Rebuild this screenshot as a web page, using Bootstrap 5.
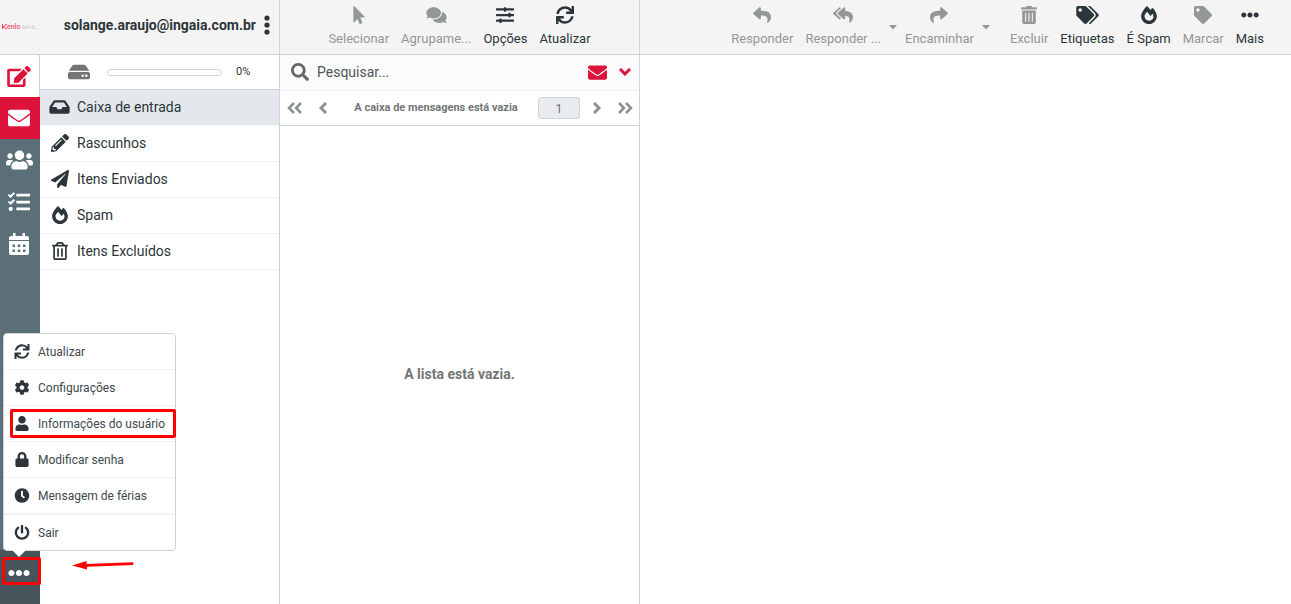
<!DOCTYPE html>
<html lang="pt-BR">
<head>
<meta charset="utf-8">
<meta name="viewport" content="width=device-width, initial-scale=1">
<title>Kenlo Mail</title>
<link href="https://cdn.jsdelivr.net/npm/bootstrap@5.3.0/dist/css/bootstrap.min.css" rel="stylesheet">
<script defer src="https://cdn.jsdelivr.net/npm/bootstrap@5.3.0/dist/js/bootstrap.bundle.min.js"></script>
<style>
  :root { --ink:#2c363a; --soft:#737677; --brand:#dc143c; --rule:#ced4da; --hair:#f1f3f4; --slate:#5b6f78; }
  body { font-family: Roboto, "Liberation Sans", sans-serif; font-size: 14px; line-height: 20px; color: var(--ink); background: #fff; }
  svg { display: block; fill: currentColor; flex: none; }
  a { color: inherit; text-decoration: none; }
  button { color: inherit; background: none; border: 0; padding: 0; }
  .head-bar { height: 55px; background: #f4f4f4; border-bottom: 1px solid var(--rule); }
  .rail-col { width: 40px; }
  .folder-col { width: 240px; border-right: 1px solid var(--rule); }
  .list-col { width: 360px; border-right: 1px solid var(--rule); }
  .rail-menu { background: var(--slate); color: #fff; }
  .rail-menu a, .more-btn { height: 42px; display: flex; align-items: center; justify-content: center; padding-right: 2px; }
  .rail-menu .compose { background: #fff; color: var(--brand); border-right: 1px solid var(--rule); }
  .rail-menu .current { background: var(--brand); }
  .rail-foot { background: #46545b; height: 54px; }
  .more-btn { width: 100%; height: 46px; color: #fff; }
  .account { padding: 0 9px 4px 0; gap: 8px; }
  .quota { height: 35px; border-bottom: 1px solid var(--rule); color: var(--soft); padding-left: 28px; }
  .quota .progress { width: 115px; height: 7px; background: #fff; border: 1px solid var(--rule); margin: 0 14px 0 17px; }
  .quota-value { font-size: 11px; color: var(--ink); }
  .folder { height: 36px; border-bottom: 1px solid var(--hair); padding: 0 0 2px 9px; gap: 7px; }
  .folder.current { background: #e4e8ec; }
  .ico-slot { width: 21px; display: flex; justify-content: center; flex: none; }
  .tool { font-size: 13px; line-height: 16px; padding: 6px 6px 0; min-width: 40px; display: flex; flex-direction: column; align-items: center; gap: 7px; height: 54px; white-space: nowrap; }
  .tool svg { height: 18px; }
  .tool:disabled, .caret:disabled { color: #939798; }
  .caret { width: 12px; height: 54px; display: flex; justify-content: center; align-items: center; }
  .reading-tools { padding-right: 21px; }
  .search-row { height: 36px; background: #fbfbfb; border-bottom: 1px solid var(--hair); padding: 0 8px 1px 11px; gap: 8px; }
  .search-row input { border: 0; background: none; outline: 0; color: var(--ink); padding: 0; min-width: 0; }
  .search-row input::placeholder { color: #4d5659; opacity: 1; }
  .search-row button { color: var(--brand); }
  .search-icon { color: #66696a; }
  .pager { height: 35px; border-bottom: 1px solid var(--rule); color: #8b9092; padding: 0 6px 0 7px; }
  .pager-pair { gap: 17px; }
  .pager strong { font-size: 11px; color: var(--soft); padding-left: 7px; }
  .pager input { width: 42px; height: 22px; margin-right: 13px; border: 1px solid var(--rule); border-radius: 3px; background: #e9ecef; text-align: center; font-size: 13px; color: var(--soft); padding: 0; }
  .stroke { fill: none; stroke: currentColor; stroke-width: 3; }
  .empty-note { padding-top: 238px; color: var(--soft); }
  .more-menu { position: absolute; left: 3px; bottom: 53px; width: 173px; border: 1px solid var(--rule); border-radius: 4px; background: #fff; font-size: 12px; z-index: 2; }
  .more-menu a { height: 36px; display: flex; align-items: center; gap: 7px; padding-left: 9px; border-bottom: 1px solid var(--hair); color: #40494d; }
  .more-menu a.before-exit { height: 37px; border-bottom-width: 2px; }
  .more-menu a.exit { height: 35px; border-bottom: 0; }
  .more-menu svg { width: 20px; height: 15px; color: var(--ink); }
  .more-menu .ico-slot { width: 18px; }
  .tip { position: absolute; left: 8px; bottom: -7px; border: 7px solid transparent; border-top-color: #fff; border-bottom: 0; }
  .marker { position: absolute; border: 3px solid #f00; border-radius: 2px; pointer-events: none; z-index: 3; }
  .mark-user { left: 6px; right: -1px; top: 75px; height: 29px; }
  .mark-more { left: 2px; width: 39px; height: 28px; bottom: 19px; }
  .arrow { position: absolute; left: 72px; bottom: 34px; z-index: 3; color: #f00; }
</style>
</head>
<body>
<svg class="d-none" aria-hidden="true">
  <symbol id="envelope" viewBox="0 0 512 512"><path d="M502.3 190.8c3.9-3.1 9.7-.2 9.7 4.7V400c0 26.5-21.5 48-48 48H48c-26.5 0-48-21.5-48-48V195.6c0-5 5.7-7.8 9.7-4.7 22.4 17.4 52.1 39.5 154.1 113.6 21.1 15.4 56.7 47.8 92.2 47.6 35.7.3 72-32.8 92.3-47.6 102-74.1 131.6-96.3 154-113.7zM256 320c23.2.4 56.6-29.2 73.4-41.4 132.7-96.3 142.8-104.7 173.4-128.7 5.8-4.5 9.2-11.5 9.2-18.9v-19c0-26.5-21.5-48-48-48H48c-26.5 0-48 21.5-48 48v19c0 7.4 3.4 14.3 9.2 18.9 30.6 23.9 40.7 32.4 173.4 128.7 16.8 12.2 50.2 41.8 73.4 41.4z"/></symbol>
  <symbol id="sync" viewBox="0 0 512 512"><path d="M440.65 12.57l4 82.77A247.16 247.16 0 0 0 255.83 8C134.73 8 33.91 94.92 12.29 209.82A12 12 0 0 0 24.09 224h49.05a12 12 0 0 0 11.67-9.26 175.91 175.91 0 0 1 317-56.94l-101.46-4.86a12 12 0 0 0-12.57 12v47.41a12 12 0 0 0 12 12H500a12 12 0 0 0 12-12V12a12 12 0 0 0-12-12h-47.37a12 12 0 0 0-11.98 12.57zM255.83 432a175.61 175.61 0 0 1-146-77.8l101.8 4.87a12 12 0 0 0 12.57-12v-47.4a12 12 0 0 0-12-12H12a12 12 0 0 0-12 12V500a12 12 0 0 0 12 12h47.35a12 12 0 0 0 12-12.6l-4.15-82.57A247.17 247.17 0 0 0 255.83 504c121.11 0 221.93-86.92 243.55-201.82a12 12 0 0 0-11.8-14.18h-49.05a12 12 0 0 0-11.67 9.26A175.86 175.86 0 0 1 255.83 432z"/></symbol>
  <symbol id="dots" viewBox="0 0 512 512"><path d="M328 256c0 39.8-32.2 72-72 72s-72-32.2-72-72 32.2-72 72-72 72 32.2 72 72zm104-72c-39.8 0-72 32.2-72 72s32.2 72 72 72 72-32.2 72-72-32.2-72-72-72zm-352 0c-39.8 0-72 32.2-72 72s32.2 72 72 72 72-32.2 72-72-32.2-72-72-72z"/></symbol>
  <symbol id="fire" viewBox="0 0 448 512"><path d="M323.56 51.2c-20.8 19.3-39.58 39.59-56.22 59.97C240.08 73.62 206.28 35.53 168 0 69.74 91.17 0 209.96 0 281.6 0 408.85 100.29 512 224 512s224-103.15 224-230.4c0-53.27-51.98-163.14-124.44-230.4zm-19.47 340.65C282.43 407.01 255.72 416 226.86 416 154.71 416 96 368.26 96 290.75c0-38.61 24.31-72.63 72.79-130.75 6.93 7.98 98.83 125.34 98.83 125.34l58.63-66.88c4.14 6.85 7.91 13.55 11.27 19.97 27.35 52.19 15.81 118.97-33.43 153.42z"/></symbol>
  <symbol id="reply" viewBox="0 0 512 512"><path d="M8.309 189.836L184.313 37.851C199.719 24.546 224 35.347 224 56.015v80.053c160.629 1.839 288 34.032 288 186.258 0 61.441-39.581 122.309-83.333 154.132-13.653 9.931-33.111-2.533-28.077-18.631 45.344-145.012-21.507-183.51-176.59-185.742V360c0 20.7-24.3 31.453-39.687 18.164l-176.004-152c-11.071-9.562-11.086-26.753 0-36.328z"/></symbol>
  <symbol id="caret" viewBox="0 0 8 5"><path d="M0 0h8L4 4.500z"/></symbol>
</svg>

<div class="d-flex vh-100 position-relative overflow-hidden">
  <nav class="rail-col d-flex flex-column flex-shrink-0" aria-label="Tarefas">
    <div class="head-bar d-flex align-items-center">
      <svg width="40" height="12" viewBox="0 0 40 12" role="img" aria-label="Kenlo Mail"><path d="M2.500 3v5M7 3L3 6l4 2" fill="none" stroke="#f0405f"/><text x="7" y="8" font-size="7" font-weight="500" fill="#f0506e">enlo</text><text x="22" y="8" font-size="6" fill="#c8c8c8">MAIL</text></svg>
    </div>
    <div class="rail-menu flex-grow-1">
      <a href="#" class="compose" aria-label="Criar e-mail"><svg width="24" height="21" viewBox="0 0 576 512"><path d="M402.6 83.2l90.2 90.2c3.8 3.8 3.8 10 0 13.8L274.4 405.6l-92.8 10.3c-12.4 1.4-22.9-9.1-21.5-21.5l10.3-92.8L388.8 83.2c3.8-3.8 10-3.8 13.8 0zm162-22.9l-48.8-48.8c-15.2-15.2-39.9-15.2-55.2 0l-35.4 35.4c-3.8 3.8-3.8 10 0 13.8l90.2 90.2c3.8 3.8 10 3.8 13.8 0l35.4-35.4c15.2-15.3 15.2-40 0-55.2zM384 346.2V448H64V128h229.8c3.2 0 6.2-1.3 8.5-3.5l40-40c7.6-7.6 2.2-20.5-8.5-20.5H48C21.5 64 0 85.5 0 112v352c0 26.5 21.5 48 48 48h352c26.5 0 48-21.5 48-48V306.2c0-10.7-12.9-16-20.5-8.5l-40 40c-2.2 2.3-3.5 5.3-3.5 8.5z"/></svg></a>
      <a href="#" class="current" aria-label="E-mail"><svg width="22" height="22"><use href="#envelope"/></svg></a>
      <a href="#" aria-label="Contatos"><svg width="27" height="22" viewBox="0 0 640 512"><path d="M96 224c35.3 0 64-28.7 64-64s-28.7-64-64-64-64 28.7-64 64 28.7 64 64 64zm448 0c35.3 0 64-28.7 64-64s-28.7-64-64-64-64 28.7-64 64 28.7 64 64 64zm32 32h-64c-17.6 0-33.5 7.1-45.1 18.6 40.3 22.1 68.9 62 75.1 109.4h66c17.7 0 32-14.3 32-32v-32c0-35.3-28.7-64-64-64zm-256 0c61.9 0 112-50.1 112-112S381.9 32 320 32 208 82.1 208 144s50.1 112 112 112zm76.8 32h-8.3c-20.8 10-43.9 16-68.5 16s-47.6-6-68.5-16h-8.3C179.6 288 128 339.6 128 403.2V432c0 26.5 21.5 48 48 48h288c26.5 0 48-21.5 48-48v-28.8c0-63.6-51.6-115.2-115.2-115.2zm-223.7-13.4C161.5 263.1 145.6 256 128 256H64c-35.3 0-64 28.7-64 64v32c0 17.7 14.3 32 32 32h65.9c6.3-47.4 34.9-87.3 75.2-109.4z"/></svg></a>
      <a href="#" aria-label="Lista de tarefas"><svg width="22" height="22" viewBox="0 0 512 512"><path d="M139.61 35.5a12 12 0 0 0-17 0L58.93 98.81l-22.7-22.12a12 12 0 0 0-17 0L3.53 92.41a12 12 0 0 0 0 17l47.59 47.4a12.78 12.78 0 0 0 17.61 0l15.59-15.62L156.52 69a12.09 12.09 0 0 0 .09-17zm0 159.19a12 12 0 0 0-17 0l-63.68 63.72-22.7-22.1a12 12 0 0 0-17 0L3.53 252a12 12 0 0 0 0 17L51 316.5a12.77 12.77 0 0 0 17.6 0l15.7-15.69 72.2-72.22a12 12 0 0 0 .09-16.9zM64 368c-26.49 0-48.59 21.5-48.59 48S37.53 464 64 464a48 48 0 0 0 0-96zm432 16H208a16 16 0 0 0-16 16v32a16 16 0 0 0 16 16h288a16 16 0 0 0 16-16v-32a16 16 0 0 0-16-16zm0-320H208a16 16 0 0 0-16 16v32a16 16 0 0 0 16 16h288a16 16 0 0 0 16-16V80a16 16 0 0 0-16-16zm0 160H208a16 16 0 0 0-16 16v32a16 16 0 0 0 16 16h288a16 16 0 0 0 16-16v-32a16 16 0 0 0-16-16z"/></svg></a>
      <a href="#" aria-label="Calendário"><svg width="20" height="22" viewBox="0 0 20 22"><path fill-rule="evenodd" d="M4 0h2.500v3h7V0H16v3h2a2 2 0 0 1 2 2v2H0V5a2 2 0 0 1 2-2h2zM0 8h20v12a2 2 0 0 1-2 2H2a2 2 0 0 1-2-2zM3.500 11.500v2.500h2.500v-2.500zM8.750 11.500v2.500h2.500v-2.500zM14 11.500v2.500h2.500v-2.500zM3.500 16.500v2.500h2.500v-2.500zM8.750 16.500v2.500h2.500v-2.500zM14 16.500v2.500h2.500v-2.500z"/></svg></a>
    </div>
    <div class="rail-foot"><button class="more-btn" type="button" aria-label="Mais opções" aria-expanded="true"><svg width="22" height="22"><use href="#dots"/></svg></button></div>
  </nav>

  <aside class="folder-col flex-shrink-0">
    <div class="head-bar account d-flex align-items-center justify-content-end">
      <strong>solange.araujo@ingaia.com.br</strong>
      <button type="button" aria-label="Menu da conta"><svg width="6" height="20" viewBox="0 0 6 20"><circle cx="3" cy="3" r="2.6"/><circle cx="3" cy="10" r="2.6"/><circle cx="3" cy="17" r="2.6"/></svg></button>
    </div>
    <div class="quota d-flex align-items-center">
      <svg width="22" height="20" viewBox="0 0 576 512"><path d="M576 304v96c0 26.51-21.49 48-48 48H48c-26.51 0-48-21.49-48-48v-96c0-26.51 21.49-48 48-48h480c26.51 0 48 21.49 48 48zm-48-80a79.557 79.557 0 0 1 30.777 6.165L462.25 85.374A48.003 48.003 0 0 0 422.311 64H153.689a48 48 0 0 0-39.938 21.374L17.223 230.165A79.557 79.557 0 0 1 48 224h480zm-48 96c-17.673 0-32 14.327-32 32s14.327 32 32 32 32-14.327 32-32-14.327-32-32-32zm-96 0c-17.673 0-32 14.327-32 32s14.327 32 32 32 32-14.327 32-32-14.327-32-32-32z"/></svg>
      <div class="progress" role="progressbar" aria-label="Cota" aria-valuenow="0" aria-valuemin="0" aria-valuemax="100"><div class="progress-bar" style="width:0%"></div></div>
      <span class="quota-value">0%</span>
    </div>
    <a href="#" class="folder current d-flex align-items-center"><span class="ico-slot"><svg width="21" height="18" viewBox="0 0 576 512"><path d="M567.938 243.908L462.25 85.374A48.003 48.003 0 0 0 422.311 64H153.689a48 48 0 0 0-39.938 21.374L8.062 243.908A47.994 47.994 0 0 0 0 270.533V400c0 26.51 21.49 48 48 48h480c26.51 0 48-21.49 48-48V270.533a47.994 47.994 0 0 0-8.062-26.625zM162.252 128h251.497l85.333 128H376l-32 64H232l-32-64H76.918l85.334-128z"/></svg></span>Caixa de entrada</a>
    <a href="#" class="folder d-flex align-items-center"><span class="ico-slot"><svg width="18" height="18" viewBox="0 0 512 512"><path d="M497.9 142.1l-46.1 46.1c-4.7 4.7-12.3 4.7-17 0l-111-111c-4.7-4.7-4.7-12.3 0-17l46.1-46.1c18.7-18.7 49.1-18.7 67.9 0l60.1 60.1c18.8 18.7 18.8 49.1 0 67.9zM284.2 99.8L21.6 362.4.4 483.9c-2.9 16.4 11.4 30.6 27.8 27.8l121.5-21.3 262.6-262.6c4.7-4.7 4.7-12.3 0-17l-111-111c-4.8-4.7-12.4-4.7-17.1 0zM124.1 339.9c-5.5-5.5-5.5-14.3 0-19.8l154-154c5.5-5.5 14.3-5.5 19.8 0s5.5 14.3 0 19.8l-154 154c-5.5 5.5-14.3 5.5-19.8 0zM88 424h48v36.3l-64.5 11.3-31.1-31.1L51.7 376H88v48z"/></svg></span>Rascunhos</a>
    <a href="#" class="folder d-flex align-items-center"><span class="ico-slot"><svg width="18" height="18" viewBox="0 0 512 512"><path d="M476 3.2L12.5 270.6c-18.1 10.4-15.8 35.6 2.2 43.2L121 358.4l287.3-253.2c5.5-4.9 13.3 2.6 8.6 8.3L176 407v80.5c0 23.6 28.5 32.9 42.5 15.8L282 426l124.6 52.2c14.2 6 30.4-2.9 33-18.2l72-432C515 7.8 493.3-6.8 476 3.2z"/></svg></span>Itens Enviados</a>
    <a href="#" class="folder d-flex align-items-center"><span class="ico-slot"><svg width="16" height="18"><use href="#fire"/></svg></span>Spam</a>
    <a href="#" class="folder d-flex align-items-center"><span class="ico-slot"><svg width="16" height="18" viewBox="0 0 448 512"><path d="M268 416h24a12 12 0 0 0 12-12V188a12 12 0 0 0-12-12h-24a12 12 0 0 0-12 12v216a12 12 0 0 0 12 12zM432 80h-82.41l-34-56.7A48 48 0 0 0 274.41 0H173.59a48 48 0 0 0-41.16 23.3L98.41 80H16A16 16 0 0 0 0 96v16a16 16 0 0 0 16 16h16v336a48 48 0 0 0 48 48h288a48 48 0 0 0 48-48V128h16a16 16 0 0 0 16-16V96a16 16 0 0 0-16-16zM171.84 50.91A6 6 0 0 1 177 48h94a6 6 0 0 1 5.15 2.91L293.61 80H154.39zM368 464H80V128h288zm-212-48h24a12 12 0 0 0 12-12V188a12 12 0 0 0-12-12h-24a12 12 0 0 0-12 12v216a12 12 0 0 0 12 12z"/></svg></span>Itens Excluídos</a>
  </aside>

  <section class="list-col flex-shrink-0 d-flex flex-column" aria-label="Lista de mensagens">
    <div class="head-bar d-flex justify-content-center" role="toolbar">
      <button class="tool" type="button" disabled><svg width="12" viewBox="0 0 320 512"><path d="M302.189 329.126H196.105l55.831 135.993c3.889 9.428-.555 19.999-9.444 23.999l-49.165 21.427c-9.165 4-19.443-.571-23.332-9.714l-53.053-129.136-86.664 89.138C18.729 472.71 0 463.554 0 447.977V18.299C0 1.899 19.921-6.096 30.277 5.443l284.412 292.542c11.472 11.179 3.007 31.141-12.5 31.141z"/></svg>Selecionar</button>
      <button class="tool" type="button" disabled><svg width="21" viewBox="0 0 576 512"><path d="M416 192c0-88.4-93.1-160-208-160S0 103.6 0 192c0 34.3 14.1 65.9 38 92-13.4 30.2-35.5 54.2-35.8 54.5-2.2 2.3-2.8 5.7-1.5 8.7S4.8 352 8 352c36.6 0 66.9-12.3 88.7-25 32.2 15.7 70.3 25 111.3 25 114.9 0 208-71.6 208-160zm122 220c23.9-26 38-57.7 38-92 0-66.9-53.5-124.2-129.3-148.1.9 6.6 1.3 13.3 1.3 20.1 0 105.9-107.7 192-240 192-10.8 0-21.3-.8-31.7-1.9C207.8 439.6 281.8 480 368 480c41 0 79.1-9.2 111.3-25 21.8 12.7 52.1 25 88.7 25 3.2 0 6.1-1.9 7.3-4.8 1.3-2.9.7-6.3-1.5-8.7-.3-.3-22.4-24.2-35.8-54.5z"/></svg>Agrupame...</button>
      <button class="tool" type="button"><svg width="18" viewBox="0 0 512 512"><path d="M496 384H160v-16c0-8.8-7.2-16-16-16h-32c-8.8 0-16 7.2-16 16v16H16c-8.8 0-16 7.2-16 16v32c0 8.8 7.2 16 16 16h80v16c0 8.8 7.2 16 16 16h32c8.8 0 16-7.2 16-16v-16h336c8.8 0 16-7.2 16-16v-32c0-8.8-7.2-16-16-16zm0-160h-80v-16c0-8.8-7.2-16-16-16h-32c-8.8 0-16 7.2-16 16v16H16c-8.8 0-16 7.2-16 16v32c0 8.8 7.2 16 16 16h336v16c0 8.8 7.2 16 16 16h32c8.8 0 16-7.2 16-16v-16h80c8.8 0 16-7.2 16-16v-32c0-8.8-7.2-16-16-16zm0-160H288V48c0-8.8-7.2-16-16-16h-32c-8.8 0-16 7.2-16 16v16H16C7.2 64 0 71.2 0 80v32c0 8.8 7.2 16 16 16h208v16c0 8.8 7.2 16 16 16h32c8.8 0 16-7.2 16-16v-16h208c8.8 0 16-7.2 16-16V80c0-8.8-7.2-16-16-16z"/></svg>Opções</button>
      <button class="tool" type="button"><svg width="18"><use href="#sync"/></svg>Atualizar</button>
    </div>
    <div class="search-row d-flex align-items-center">
      <svg class="search-icon" width="18" height="18" viewBox="0 0 512 512"><path d="M505 442.7L405.3 343c-4.5-4.5-10.6-7-17-7H372c27.6-35.3 44-79.7 44-128C416 93.1 322.9 0 208 0S0 93.1 0 208s93.1 208 208 208c48.3 0 92.7-16.4 128-44v16.3c0 6.4 2.5 12.5 7 17l99.7 99.7c9.4 9.4 24.6 9.4 33.9 0l28.3-28.3c9.4-9.4 9.4-24.6.1-34zM208 336c-70.7 0-128-57.2-128-128 0-70.7 57.2-128 128-128 70.7 0 128 57.2 128 128 0 70.7-57.2 128-128 128z"/></svg>
      <input type="search" class="flex-grow-1" placeholder="Pesquisar..." aria-label="Pesquisar">
      <button type="button" aria-label="Não lidas"><svg width="19" height="19"><use href="#envelope"/></svg></button>
      <button type="button" class="ms-1" aria-label="Opções de pesquisa"><svg class="stroke" width="12" height="8" viewBox="0 0 12 8"><path d="M1 1l5 5 5-5"/></svg></button>
    </div>
    <div class="pager d-flex align-items-center">
      <div class="pager-pair d-flex">
        <button type="button" aria-label="Primeira página"><svg class="stroke" width="15" height="12" viewBox="0 0 15 12"><path d="M7 1L2 6l5 5M14 1L9 6l5 5" stroke-width="2.5"/></svg></button>
        <button type="button" aria-label="Página anterior"><svg class="stroke" width="8" height="12" viewBox="0 0 8 12"><path d="M7 1L2 6l5 5"/></svg></button>
      </div>
      <strong class="flex-grow-1 text-center">A caixa de mensagens está vazia</strong>
      <input type="text" value="1" aria-label="Página">
      <div class="pager-pair d-flex">
        <button type="button" aria-label="Próxima página"><svg class="stroke" width="8" height="12" viewBox="0 0 8 12"><path d="M1 1l5 5-5 5"/></svg></button>
        <button type="button" aria-label="Última página"><svg class="stroke" width="15" height="12" viewBox="0 0 15 12"><path d="M1 1l5 5-5 5M8 1l5 5-5 5" stroke-width="2.5"/></svg></button>
      </div>
    </div>
    <p class="empty-note text-center fw-bold m-0">A lista está vazia.</p>
  </section>

  <main class="flex-grow-1">
    <div class="head-bar reading-tools d-flex justify-content-end" role="toolbar">
      <button class="tool" type="button" disabled><svg width="18"><use href="#reply"/></svg>Responder</button>
      <button class="tool" type="button" disabled><svg width="20" viewBox="0 0 576 512"><path d="M136.309 189.836L312.313 37.851C327.72 24.546 352 35.348 352 56.015v82.763c129.182 10.231 224 52.212 224 183.548 0 61.441-39.582 122.309-83.333 154.132-13.653 9.931-33.111-2.533-28.077-18.631 38.512-123.162-3.922-169.482-112.59-182.015v84.175c0 20.701-24.3 31.453-39.687 18.164L136.309 226.164c-11.071-9.561-11.086-26.753 0-36.328zm-128 36.328L184.313 378.15C199.7 391.439 224 380.687 224 359.986v-15.818l-108.606-93.785A55.96 55.96 0 0 1 96 207.998a55.953 55.953 0 0 1 19.393-42.38L224 71.832V56.015c0-20.667-24.28-31.469-39.687-18.164L8.309 189.836c-11.086 9.575-11.071 26.767 0 36.328z"/></svg>Responder ...</button>
      <button class="caret" type="button" disabled aria-label="Opções de resposta"><svg width="8" height="5"><use href="#caret"/></svg></button>
      <button class="tool" type="button" disabled><svg width="18" viewBox="0 0 512 512"><use href="#reply" width="512" height="512" transform="translate(512) scale(-1 1)"/></svg>Encaminhar</button>
      <button class="caret me-2" type="button" disabled aria-label="Opções de encaminhamento"><svg width="8" height="5"><use href="#caret"/></svg></button>
      <button class="tool ms-1" type="button" disabled><svg width="16" viewBox="0 0 448 512"><path d="M32 464a48 48 0 0 0 48 48h288a48 48 0 0 0 48-48V128H32zm272-256a16 16 0 0 1 32 0v224a16 16 0 0 1-32 0zm-96 0a16 16 0 0 1 32 0v224a16 16 0 0 1-32 0zm-96 0a16 16 0 0 1 32 0v224a16 16 0 0 1-32 0zM432 32H312l-9.4-18.7A24 24 0 0 0 281.1 0H166.8a23.72 23.72 0 0 0-21.4 13.3L136 32H16A16 16 0 0 0 0 48v32a16 16 0 0 0 16 16h416a16 16 0 0 0 16-16V48a16 16 0 0 0-16-16z"/></svg>Excluir</button>
      <button class="tool" type="button"><svg width="23" viewBox="0 0 640 512"><path d="M497.941 225.941L286.059 14.059A48 48 0 0 0 252.118 0H48C21.49 0 0 21.49 0 48v204.118a48 48 0 0 0 14.059 33.941l211.882 211.882c18.744 18.745 49.136 18.746 67.882 0l204.118-204.118c18.745-18.745 18.745-49.137 0-67.882zM112 160c-26.51 0-48-21.49-48-48s21.49-48 48-48 48 21.49 48 48-21.49 48-48 48zm513.941 133.823L421.823 497.941c-18.745 18.745-49.137 18.745-67.882 0l-.36-.36L527.64 323.522c16.999-16.999 26.36-39.6 26.36-63.64s-9.362-46.641-26.36-63.64L331.397 0h48.721a48 48 0 0 1 33.941 14.059l211.882 211.882c18.745 18.745 18.745 49.137 0 67.882z"/></svg>Etiquetas</button>
      <button class="tool" type="button"><svg width="16"><use href="#fire"/></svg>É Spam</button>
      <button class="tool" type="button" disabled><svg width="18" viewBox="0 0 512 512"><path d="M0 252.118V48C0 21.49 21.49 0 48 0h204.118a48 48 0 0 1 33.941 14.059l211.882 211.882c18.745 18.745 18.745 49.137 0 67.882L293.823 497.941c-18.745 18.745-49.137 18.745-67.882 0L14.059 286.059A48 48 0 0 1 0 252.118zM112 64c-26.51 0-48 21.49-48 48s21.49 48 48 48 48-21.49 48-48-21.49-48-48-48z"/></svg>Marcar</button>
      <button class="tool" type="button"><svg width="18"><use href="#dots"/></svg>Mais</button>
    </div>
  </main>

  <div class="more-menu">
    <a href="#"><span class="ico-slot"><svg><use href="#sync"/></svg></span>Atualizar</a>
    <a href="#"><span class="ico-slot"><svg viewBox="0 0 512 512"><path d="M487.4 315.7l-42.6-24.6c4.3-23.2 4.3-47 0-70.2l42.6-24.6c4.9-2.8 7.1-8.6 5.5-14-11.1-35.6-30-67.8-54.7-94.6-3.8-4.1-10-5.1-14.8-2.3L380.8 110c-17.9-15.4-38.5-27.3-60.8-35.1V25.8c0-5.6-3.9-10.5-9.4-11.7-36.7-8.2-74.3-7.8-109.2 0-5.5 1.2-9.4 6.1-9.4 11.7V75c-22.2 7.9-42.8 19.8-60.8 35.1L88.7 85.5c-4.9-2.8-11-1.9-14.8 2.3-24.7 26.7-43.6 58.9-54.7 94.6-1.7 5.4.6 11.2 5.5 14L67.3 221c-4.3 23.2-4.3 47 0 70.2l-42.6 24.6c-4.9 2.8-7.1 8.6-5.5 14 11.1 35.6 30 67.8 54.7 94.6 3.8 4.1 10 5.1 14.8 2.3l42.6-24.6c17.9 15.4 38.5 27.3 60.8 35.1v49.2c0 5.6 3.9 10.5 9.4 11.7 36.7 8.2 74.3 7.8 109.2 0 5.5-1.2 9.4-6.1 9.4-11.7v-49.2c22.2-7.9 42.8-19.8 60.8-35.1l42.6 24.6c4.9 2.8 11 1.9 14.8-2.3 24.7-26.7 43.6-58.9 54.7-94.6 1.5-5.5-.7-11.3-5.6-14.1zM256 336c-44.1 0-80-35.9-80-80s35.9-80 80-80 80 35.9 80 80-35.9 80-80 80z"/></svg></span>Configurações</a>
    <a href="#"><span class="ico-slot"><svg viewBox="0 0 448 512"><path d="M224 256c70.7 0 128-57.3 128-128S294.7 0 224 0 96 57.3 96 128s57.3 128 128 128zm89.6 32h-16.7c-22.2 10.2-46.9 16-72.9 16s-50.6-5.8-72.9-16h-16.7C60.2 288 0 348.2 0 422.4V464c0 26.5 21.5 48 48 48h352c26.5 0 48-21.5 48-48v-41.6c0-74.2-60.2-134.4-134.4-134.4z"/></svg></span>Informações do usuário</a>
    <a href="#"><span class="ico-slot"><svg viewBox="0 0 448 512"><path d="M400 224h-24v-72C376 68.2 307.8 0 224 0S72 68.2 72 152v72H48c-26.5 0-48 21.5-48 48v192c0 26.5 21.5 48 48 48h352c26.5 0 48-21.5 48-48V272c0-26.5-21.5-48-48-48zm-104 0H152v-72c0-39.7 32.3-72 72-72s72 32.3 72 72v72z"/></svg></span>Modificar senha</a>
    <a href="#" class="before-exit"><span class="ico-slot"><svg viewBox="0 0 512 512"><path d="M256,8C119,8,8,119,8,256S119,504,256,504,504,393,504,256,393,8,256,8Zm92.49,313h0l-20,25a16,16,0,0,1-22.49,2.5h0l-67-49.72a40,40,0,0,1-15-31.23V112a16,16,0,0,1,16-16h32a16,16,0,0,1,16,16V256l58,42.5A16,16,0,0,1,348.49,321Z"/></svg></span>Mensagem de férias</a>
    <a href="#" class="exit"><span class="ico-slot"><svg viewBox="0 0 512 512"><path d="M400 54.1c63 45 104 118.6 104 201.9 0 136.8-110.8 247.7-247.5 248C120 504.3 8.2 393 8 256.4 7.9 173.1 48.9 99.3 111.8 54.2c11.7-8.3 28-4.8 35 7.7L162.6 90c5.9 10.5 3.1 23.8-6.6 31-41.5 30.8-68 79.6-68 134.9-.1 92.3 74.5 168.1 168 168.1 91.6 0 168.6-74.2 168-169.1-.3-51.8-24.7-101.8-68.1-134-9.7-7.2-12.4-20.5-6.5-30.9l15.8-28.1c7-12.4 23.2-16.1 34.8-7.8zM296 264V24c0-13.3-10.7-24-24-24h-32c-13.3 0-24 10.7-24 24v240c0 13.3 10.7 24 24 24h32c13.3 0 24-10.7 24-24z"/></svg></span>Sair</a>
    <span class="tip"></span>
    <span class="marker mark-user"></span>
  </div>
  <span class="marker mark-more"></span>
  <svg class="arrow" width="62" height="10" viewBox="0 0 62 10" aria-hidden="true"><path d="M0 5.5L14.500 1v3L61 2.200q1 1.500 0 2.800L15 6.700V9.500z"/></svg>
</div>
</body>
</html>
